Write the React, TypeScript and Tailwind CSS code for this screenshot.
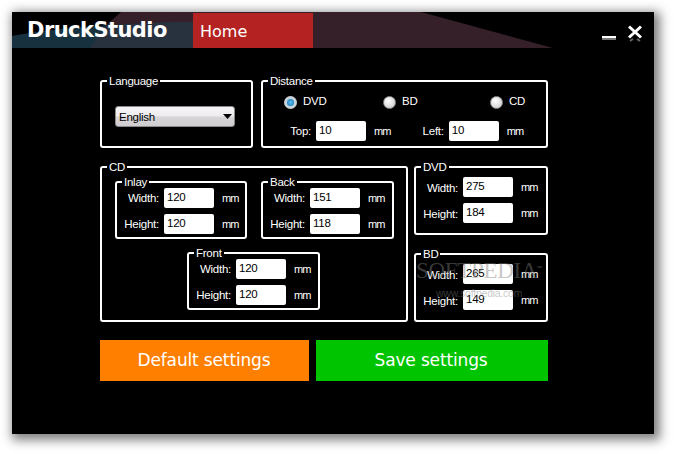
import type { ReactNode } from "react";

const uiFont = "font-['Liberation_Sans',sans-serif] tracking-[-0.25px]";

const Group = ({ title, className, children }: { title: string; className: string; children: ReactNode }) => (
  <div className={`relative border-2 border-white rounded-[3px] ${className}`}>
    <span className="absolute -top-[8px] left-[5px] bg-black px-[2px] text-[11.5px] leading-[15px] text-white">{title}</span>
    {children}
  </div>
);

const NumberBox = ({ value }: { value: number }) => (
  <input
    readOnly
    defaultValue={value}
    className="w-[50px] h-[20px] bg-white rounded-[2px] pl-[3px] pb-[2px] text-[11.5px] text-black outline-none"
  />
);

const Mm = () => <span className="ml-[8px] text-[11px] tracking-[-0.8px] text-white">mm</span>;

const SizeRow = ({ label, value, low }: { label: string; value: number; low?: boolean }) => (
  <div className="flex items-center h-[20px]">
    <span className={`w-[42px] text-right text-[11.5px] text-white ${low ? "pt-[4px]" : "pt-[2px]"}`}>{label}</span>
    <span className="w-[5px]" />
    <NumberBox value={value} />
    <Mm />
  </div>
);

const SizeGroup = ({ title, width, height, className, low }: { title: string; width: number; height: number; className: string; low?: boolean }) => (
  <Group title={title} className={className}>
    <div className="flex flex-col gap-[6px]">
      <SizeRow label="Width:" value={width} low={low} />
      <SizeRow label="Height:" value={height} low={low} />
    </div>
  </Group>
);

const Radio = ({ checked }: { checked?: boolean }) => (
  <span
    className={
      checked
        ? "w-[13px] h-[13px] rounded-full border-[3px] border-[#c9d3da] bg-[radial-gradient(circle,#5cc0f0,#0f6fae)]"
        : "w-[13px] h-[13px] rounded-full border border-[#8c8c8c] bg-[radial-gradient(circle_at_40%_35%,#ffffff,#c4c4c4)]"
    }
  />
);

const RadioItem = ({ label, checked, className }: { label: string; checked?: boolean; className: string }) => (
  <div className={`flex items-center gap-[6px] text-[11.5px] text-white ${className}`}>
    <Radio checked={checked} />
    <span>{label}</span>
  </div>
);

const App = () => {
  return (
    <div className={`w-[674px] h-[454px] bg-white p-[12px] overflow-hidden ${uiFont}`}>
      <div className="w-[642px] h-[422px] bg-black shadow-[3px_3px_10px_3px_rgba(0,0,0,0.5)]">
        {/* title bar */}
        <div className="relative flex h-[36px]">
          <svg className="absolute inset-0" width="642" height="36" viewBox="0 0 642 36">
            <path d="M93 14 L109 0 H409 L541 36 H93 Z" fill="#35202a" />
            <path d="M0 24 C40 16 110 11 181 10 V36 H0 Z" fill="#17323e" />
            <path d="M78 36 L93 15 C120 11 150 10 181 10 V36 Z" fill="#28323f" />
          </svg>
          <div className="relative w-[181px] pl-[15px] pt-[4px] font-['DejaVu_Sans',sans-serif] font-bold text-[21px] tracking-[-0.55px] leading-[28px] text-white">
            DruckStudio
          </div>
          <div className="relative mt-[1px] w-[120px] h-[35px] bg-[#b52222] pl-[7px] font-['DejaVu_Sans',sans-serif] text-[16px] tracking-normal leading-[37px] text-white">
            Home
          </div>
          <div className="relative ml-auto mr-[11px] mt-[12px]">
            <svg width="42" height="18" viewBox="0 0 42 18">
              <path d="M1 13 H15" stroke="#fff" strokeWidth="2" />
              <path d="M1 15 H15" stroke="#777" strokeWidth="2" />
              <path d="M28 2.5 L40 13.5 M40 2.5 L28 13.5" stroke="#fff" strokeWidth="3" />
              <path d="M29 17 L32 15 M39 17 L36 15" stroke="#666" strokeWidth="2" />
            </svg>
          </div>
        </div>

        {/* settings */}
        <div className="pl-[88px] pt-[32px]">
          <div className="flex gap-[8px]">
            <Group title="Language" className="w-[153px] h-[68px] pl-[13px] pt-[24px]">
              <div className="flex items-center justify-between w-[120px] h-[21px] rounded-[3px] border border-[#8a8a8a] bg-[linear-gradient(#f6f4f7_0%,#eeecef_45%,#d6d4d6_55%,#cfcdcf_100%)] pl-[3px] pr-[2px] text-[11.5px] text-black">
                <span className="pt-[2px]">English</span>
                <svg width="9" height="5" viewBox="0 0 9 5">
                  <path d="M0 0 H9 L4.5 5 Z" fill="#000" />
                </svg>
              </div>
            </Group>
            <Group title="Distance" className="w-[287px] h-[68px] pt-[13px]">
              <div className="flex h-[14px] pl-[21px]">
                <RadioItem label="DVD" checked className="w-[99px]" />
                <RadioItem label="BD" className="w-[107px]" />
                <RadioItem label="CD" className="w-[40px]" />
              </div>
              <div className="flex items-center mt-[12px] text-[11.5px] text-white">
                <span className="w-[48px] text-right pt-[2px]">Top:</span>
                <span className="w-[5px]" />
                <NumberBox value={10} />
                <Mm />
                <span className="w-[53px] text-right pt-[2px]">Left:</span>
                <span className="w-[5px]" />
                <NumberBox value={10} />
                <Mm />
              </div>
            </Group>
          </div>

          <div className="flex gap-[6px] mt-[18px]">
            <Group title="CD" className="w-[308px] h-[156px] pl-[13px] pt-[13px]">
              <div className="flex gap-[14px]">
                <SizeGroup title="Inlay" width={120} height={120} className="w-[132px] h-[58px] pt-[5px]" />
                <SizeGroup title="Back" width={151} height={118} className="w-[133px] h-[58px] pt-[5px]" />
              </div>
              <SizeGroup title="Front" width={120} height={120} className="w-[133px] h-[58px] pt-[5px] mt-[13px] ml-[72px]" />
            </Group>
            <div className="flex flex-col gap-[18px] w-[134px]">
              <SizeGroup title="DVD" width={275} height={184} low className="h-[69px] pt-[9px]" />
              <div className="relative">
                <SizeGroup title="BD" width={265} height={149} low className="h-[69px] pt-[9px]" />
                {/* watermark */}
                <span className="absolute left-[2px] top-[6px] font-['Liberation_Serif',serif] text-[23px] tracking-[-0.3px] leading-[24px] text-[#808080]/45 pointer-events-none">
                  SOFTPEDIA
                </span>
                <span className="absolute left-[122px] top-[11px] text-[6px] leading-[8px] text-[#808080]/60 pointer-events-none">™</span>
                <span className="absolute left-[22px] top-[34px] text-[10.5px] leading-[12px] text-[#808080]/45 pointer-events-none">
                  www.softpedia.com
                </span>
              </div>
            </div>
          </div>

          <div className="flex gap-[7px] mt-[18px] font-['DejaVu_Sans',sans-serif] text-[17px] tracking-[-0.15px] text-white">
            <button className="w-[209px] h-[41px] pr-[1px] bg-[#ff8000]">Default settings</button>
            <button className="w-[232px] h-[41px] pr-[2px] bg-[#00c400]">Save settings</button>
          </div>
        </div>
      </div>
    </div>
  );
};

export default App;
